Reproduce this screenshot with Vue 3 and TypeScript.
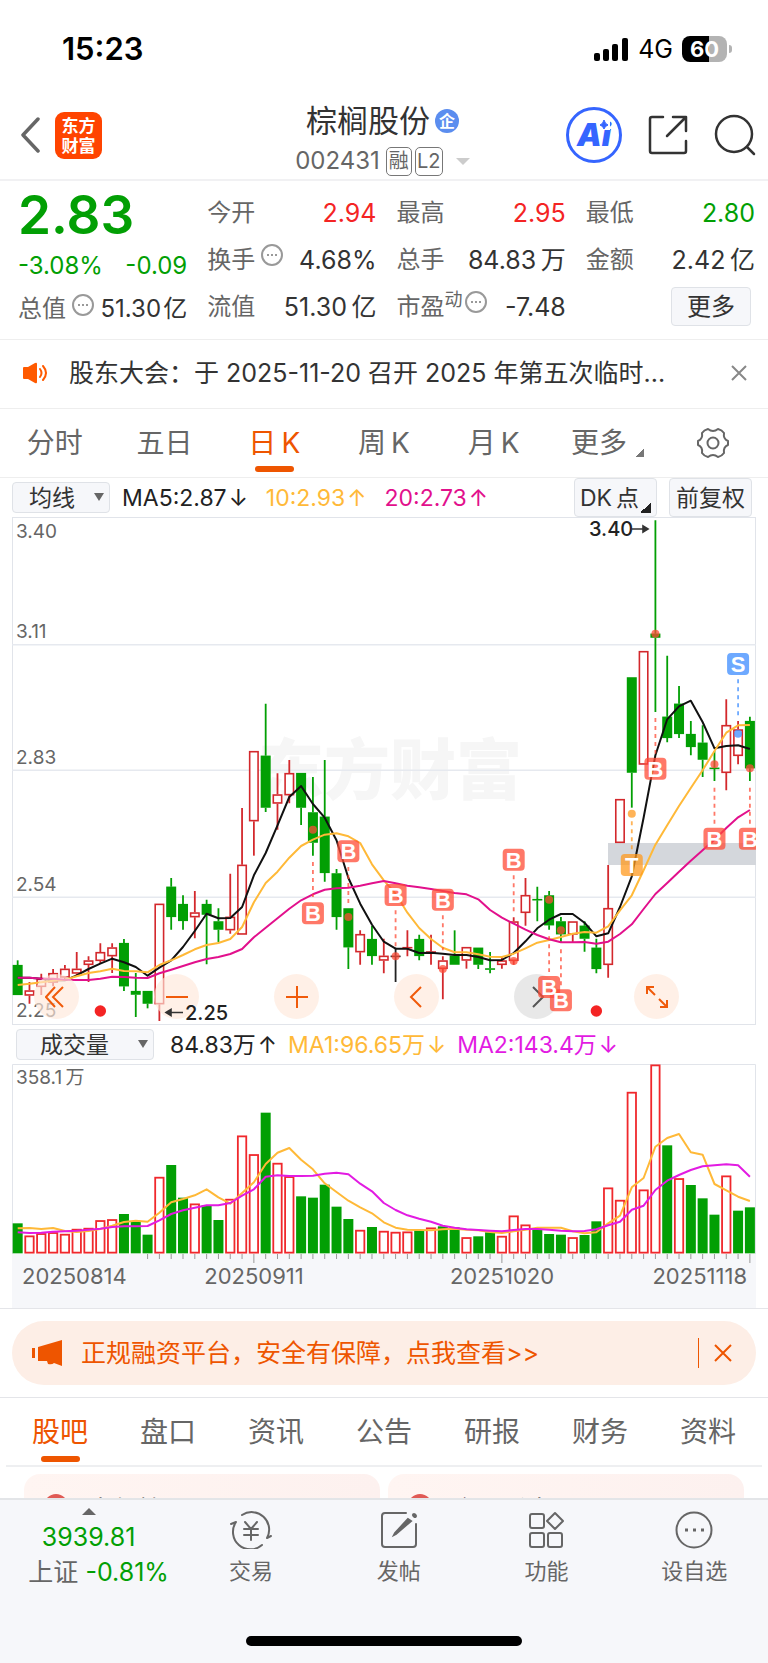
<script setup lang="ts">
import { ref } from 'vue'

type Tone = 'g' | 'r' | 'k'
type Candle = [Tone, number, number, number, number]

// Sub-pixel units: three per chart pixel. [tone, high, body top, body bottom, low]
const candles: Candle[] = [
  ['g', 1350, 1364, 1454, 1454], ['r', 1415, 1440, 1456, 1480], ['r', 1390, 1405, 1430, 1454],
  ['r', 1376, 1388, 1417, 1428], ['r', 1364, 1375, 1402, 1412], ['r', 1325, 1375, 1390, 1400],
  ['r', 1338, 1350, 1364, 1415], ['r', 1299, 1325, 1352, 1358], ['r', 1299, 1311, 1338, 1388],
  ['g', 1286, 1298, 1428, 1442], ['g', 1388, 1442, 1453, 1520], ['g', 1442, 1442, 1480, 1494],
  ['r', 1180, 1180, 1482, 1532], ['g', 1103, 1129, 1220, 1258], ['g', 1155, 1181, 1232, 1258],
  ['r', 1142, 1206, 1221, 1284], ['g', 1168, 1181, 1213, 1362], ['g', 1194, 1233, 1258, 1296],
  ['r', 1090, 1219, 1260, 1270], ['r', 893, 1063, 1273, 1273], ['r', 722, 722, 933, 1036],
  ['g', 580, 736, 892, 905], ['r', 789, 852, 880, 958], ['r', 749, 788, 855, 879],
  ['g', 788, 788, 892, 944], ['g', 800, 906, 997, 1036], ['g', 749, 919, 1088, 1114],
  ['g', 1076, 1089, 1220, 1258], ['g', 1194, 1194, 1311, 1376], ['r', 1260, 1271, 1326, 1363],
  ['g', 1247, 1286, 1337, 1363], ['r', 1285, 1336, 1351, 1389], ['k', 1312, 1336, 1340, 1415],
  ['r', 1260, 1310, 1314, 1338], ['g', 1273, 1286, 1337, 1350], ['r', 1273, 1323, 1327, 1363],
  ['r', 1338, 1350, 1376, 1467], ['g', 1260, 1336, 1363, 1363], ['r', 1310, 1310, 1351, 1375],
  ['g', 1312, 1312, 1363, 1376], ['g', 1325, 1374, 1378, 1389], ['r', 1340, 1350, 1364, 1375],
  ['r', 1221, 1233, 1352, 1363], ['r', 1103, 1154, 1208, 1246], ['g', 1129, 1166, 1170, 1233],
  ['g', 1142, 1155, 1245, 1258], ['g', 1220, 1233, 1272, 1296], ['r', 1233, 1233, 1273, 1298],
  ['g', 1233, 1246, 1285, 1324], ['g', 1285, 1312, 1376, 1389], ['r', 1064, 1193, 1364, 1402],
  ['r', 866, 866, 998, 998], ['g', 501, 501, 787, 892], ['r', 422, 422, 763, 763],
  ['g', 30, 370, 382, 605], ['g', 436, 619, 683, 696], ['g', 527, 580, 671, 683],
  ['g', 632, 671, 710, 735], ['g', 645, 697, 748, 800], ['g', 722, 772, 776, 812],
  ['r', 567, 644, 788, 840], ['r', 632, 657, 737, 762], ['g', 619, 632, 774, 812],
]
const ma5 = [1402, 1402, 1405, 1410, 1410, 1395, 1376, 1360, 1345, 1356, 1370, 1396, 1372, 1350, 1310, 1262, 1210, 1224, 1223, 1190, 1095, 1028, 945, 860, 827, 881, 922, 990, 1103, 1180, 1243, 1294, 1315, 1315, 1328, 1327, 1330, 1334, 1334, 1340, 1350, 1349, 1328, 1293, 1254, 1228, 1211, 1211, 1237, 1278, 1269, 1190, 1098, 922, 735, 627, 588, 571, 635, 714, 707, 705, 716]
const ma10 = [1424, 1420, 1416, 1411, 1408, 1398, 1388, 1383, 1375, 1382, 1383, 1386, 1364, 1350, 1334, 1317, 1304, 1298, 1286, 1250, 1176, 1118, 1084, 1042, 1007, 988, 973, 969, 978, 998, 1062, 1110, 1150, 1207, 1253, 1286, 1312, 1326, 1326, 1332, 1339, 1340, 1330, 1314, 1297, 1289, 1280, 1270, 1265, 1267, 1248, 1200, 1155, 1080, 1003, 945, 887, 833, 780, 722, 667, 645, 644]
const ma20 = [1402, 1402, 1405, 1405, 1408, 1409, 1409, 1405, 1399, 1400, 1402, 1403, 1389, 1378, 1367, 1356, 1346, 1340, 1331, 1316, 1281, 1252, 1224, 1195, 1170, 1152, 1138, 1134, 1132, 1126, 1119, 1112, 1119, 1126, 1131, 1136, 1142, 1148, 1152, 1167, 1199, 1222, 1240, 1258, 1274, 1287, 1296, 1296, 1295, 1300, 1294, 1271, 1242, 1196, 1151, 1118, 1084, 1051, 1020, 988, 953, 921, 899]

type Signal = { i: number; k: 'B' | 'S' | 'T'; at: number; dot: number; from: number; to: number }
const signals: Signal[] = [
  { i: 25, k: 'B', at: 1209, dot: 958, from: 1055, to: 1160 },
  { i: 28, k: 'B', at: 1023, dot: 1220, from: 1070, to: 1180 },
  { i: 32, k: 'B', at: 1154, dot: 1338, from: 1200, to: 1310 },
  { i: 36, k: 'B', at: 1168, dot: 1376, from: 1215, to: 1320 },
  { i: 42, k: 'B', at: 1048, dot: 1352, from: 1095, to: 1205 },
  { i: 45, k: 'B', at: 1430, dot: 1168, from: 1278, to: 1385 },
  { i: 46, k: 'B', at: 1470, dot: 1260, from: 1317, to: 1425 },
  { i: 52, k: 'T', at: 1064, dot: 910, from: 933, to: 1020 },
  { i: 54, k: 'B', at: 775, dot: 370, from: 623, to: 730 },
  { i: 59, k: 'B', at: 985, dot: 762, from: 832, to: 940 },
  { i: 61, k: 'S', at: 461, dot: 670, from: 507, to: 615 },
  { i: 62, k: 'B', at: 985, dot: 774, from: 832, to: 940 },
]
const tones = { B: '#ff4b36', S: '#3d8dff', T: '#ff9a1f' }

const volumes: [Tone, number][] = [
  ['g', 608], ['r', 645], ['r', 638], ['r', 635], ['r', 640], ['r', 625], ['r', 622], ['r', 599], ['r', 596], ['g', 580],
  ['g', 602], ['g', 642], ['r', 469], ['g', 433], ['g', 531], ['r', 549], ['g', 554], ['g', 598], ['r', 535], ['r', 345],
  ['r', 401], ['g', 276], ['r', 427], ['r', 467], ['g', 527], ['g', 531], ['g', 492], ['g', 558], ['g', 595], ['r', 628],
  ['g', 619], ['r', 631], ['r', 634], ['r', 633], ['g', 629], ['r', 621], ['g', 617], ['g', 620], ['r', 650], ['g', 647],
  ['g', 635], ['r', 646], ['r', 585], ['r', 612], ['g', 625], ['g', 640], ['g', 642], ['r', 650], ['g', 643], ['g', 602],
  ['r', 501], ['r', 538], ['r', 214], ['r', 507], ['r', 132], ['g', 374], ['r', 473], ['g', 493], ['g', 533], ['g', 582],
  ['r', 465], ['g', 570], ['g', 560],
]
const vma1 = [623, 622, 625, 622, 631, 634, 631, 625, 615, 604, 600, 603, 576, 545, 535, 524, 506, 530, 549, 517, 485, 430, 396, 382, 417, 446, 488, 514, 540, 560, 578, 605, 621, 627, 628, 629, 626, 624, 627, 629, 634, 637, 632, 627, 621, 621, 621, 632, 638, 635, 608, 585, 500, 472, 378, 352, 340, 395, 402, 490, 509, 528, 541]
const vma2 = [635, 637, 636, 633, 632, 630, 627, 624, 619, 617, 617, 616, 599, 580, 569, 561, 554, 554, 547, 525, 506, 468, 464, 466, 466, 465, 459, 456, 461, 489, 512, 547, 568, 584, 594, 603, 615, 621, 626, 628, 630, 632, 628, 625, 625, 627, 630, 632, 631, 626, 614, 603, 567, 555, 508, 480, 463, 448, 437, 434, 431, 434, 468]

const cx = (i: number) => 5.67 + i * 11.81
const py = (v: number) => (v - 20) / 3
const vy = (v: number) => (v - 130) / 3
const line = (vals: number[], f: (v: number) => number) =>
  vals.map((v, i) => `${cx(i).toFixed(1)},${f(v).toFixed(1)}`).join(' ')
const color = (t: Tone) => (t === 'g' ? '#029f04' : t === 'r' ? '#d3282c' : '#222')

const grid = [403, 780, 1161]
const axis = [
  { t: '3.40', y: 21 }, { t: '3.11', y: 121 }, { t: '2.83', y: 247 }, { t: '2.54', y: 374 }, { t: '2.25', y: 500 },
]
const ticks = Array.from({ length: 52 }, (_, n) => n + 11)

const periods = ['分时', '五日', '日\u2009K', '周\u2009K', '月\u2009K']
const period = ref(periods[2])
const sections = ['股吧', '盘口', '资讯', '公告', '研报', '财务', '资料']
const section = ref('股吧')
</script>

<template>
  <div class="app">
    <div class="status">
      <span class="clock">15:23</span>
      <span class="status-right">
        <svg width="34" height="23" viewBox="0 0 34 23"><rect x="0" y="15" width="6" height="8" rx="2" /><rect x="9" y="11" width="6" height="12" rx="2" /><rect x="18" y="6" width="6" height="17" rx="2" /><rect x="28" y="0" width="6" height="23" rx="2" /></svg>
        <span class="net">4G</span>
        <span class="battery"><b>60</b></span><i class="nub"></i>
      </span>
    </div>

    <header class="head">
      <div class="side start">
        <button class="icon" aria-label="返回"><svg width="20" height="36" viewBox="0 0 20 36"><path d="M18 2 3 18l15 16" fill="none" stroke="#666" stroke-width="3.500" stroke-linecap="round" stroke-linejoin="round" /></svg></button>
        <span class="logo"><span>东方</span><span>财富</span></span>
      </div>
      <div class="title">
        <h1>棕榈股份<span class="corp">企</span></h1>
        <div class="code">002431<span class="tag">融</span><span class="tag l2">L2</span><i class="tri"></i></div>
      </div>
      <div class="side end">
        <button class="ai" aria-label="Ai"><span>Ai</span><svg class="star" width="12" height="12" viewBox="0 0 12 12"><path d="M0 0h12v11H0z" fill="#fff" /><path d="M6 1q1 4 4 5-3 1-4 4-1-3-4-4 3-1 4-5z" fill="#3565ff" stroke="#3565ff" /></svg></button>
        <button class="icon" aria-label="分享"><svg width="40" height="40" viewBox="0 0 40 40" fill="none" stroke="#333" stroke-width="2.500" stroke-linecap="round" stroke-linejoin="round"><path d="M15 2H4Q2 2 2 4v32q0 2 2 2h32q2 0 2-2V26M25 2h13v14M38 2 19 21" /></svg></button>
        <button class="icon" aria-label="搜索"><svg width="42" height="42" viewBox="0 0 42 42" fill="none" stroke="#333" stroke-width="2.500" stroke-linecap="round"><circle cx="20" cy="20" r="18" /><path d="m33 33 7 7" /></svg></button>
      </div>
    </header>

    <section class="quote">
      <div class="col main">
        <strong class="price">2.83</strong>
        <div class="cell chg"><span>-3.08%</span><span>-0.09</span></div>
        <div class="cell"><span class="lab">总值<svg class="info" viewBox="0 0 22 22"><circle cx="11" cy="11" r="10" /><path d="M6 11h2M10 11h2M14 11h2" /></svg></span><span class="num">51.30&#8202;亿</span></div>
      </div>
      <div class="col">
        <div class="cell"><span class="lab">今开</span><span class="up">2.94</span></div>
        <div class="cell"><span class="lab">换手<svg class="info gap" viewBox="0 0 22 22"><circle cx="11" cy="11" r="10" /><path d="M6 11h2M10 11h2M14 11h2" /></svg></span><span>4.68%</span></div>
        <div class="cell"><span class="lab">流值</span><span>51.30&#8201;亿</span></div>
      </div>
      <div class="col">
        <div class="cell"><span class="lab">最高</span><span class="up">2.95</span></div>
        <div class="cell"><span class="lab">总手</span><span>84.83&#8201;万</span></div>
        <div class="cell"><span class="lab">市盈<small>动</small><svg class="info" viewBox="0 0 22 22"><circle cx="11" cy="11" r="10" /><path d="M6 11h2M10 11h2M14 11h2" /></svg></span><span>-7.48</span></div>
      </div>
      <div class="col">
        <div class="cell"><span class="lab">最低</span><span class="down">2.80</span></div>
        <div class="cell"><span class="lab">金额</span><span>2.42&#8201;亿</span></div>
        <div class="cell more"><button class="box">更多</button></div>
      </div>
    </section>

    <section class="notice">
      <svg width="26" height="22" viewBox="0 0 26 22"><path d="M1 6q0-1 1-1h4l7-4q2-1 2 1v18q0 2-2 1l-7-4H2q-1 0-1-1z" fill="#ff5a00" /><path d="M18 7q3 4 0 8M21 4q6 7 0 14" fill="none" stroke="#ff5a00" stroke-width="2" stroke-linecap="round" /></svg>
      <a href="#">股东大会：于 2025-11-20 召开 2025 年第五次临时...</a>
      <button class="icon" aria-label="关闭"><svg width="18" height="18" viewBox="0 0 18 18"><path d="m2 2 14 14M16 2 2 16" stroke="#888" stroke-width="2" /></svg></button>
    </section>

    <nav class="periods">
      <button v-for="p in periods" :key="p" :class="{ on: p === period }" @click="period = p">{{ p }}</button>
      <button class="wide">更多<i class="corner"></i></button>
      <button aria-label="设置"><svg width="34" height="34" viewBox="0 0 34 34" fill="none" stroke="#666" stroke-width="2" stroke-linejoin="round"><path d="M12 3q5 4 10 0 4 1 6 4-1 6 4 8v4q-5 2-4 8-2 3-6 4-5-4-10 0-4-1-6-4 1-6-4-8v-4q5-2 4-8 2-3 6-4z" /><circle cx="17" cy="17" r="5.500" /></svg></button>
    </nav>

    <div class="bar">
      <label class="pick"><select aria-label="指标"><option>均线</option></select><i></i></label>
      <span class="m5">MA5:2.87<em>↓</em></span>
      <span class="m10">10:2.93<em>↑</em></span>
      <span class="m20">20:2.73<em>↑</em></span>
      <span class="right">
        <button class="box dk">DK&#8201;点<i class="corner dark"></i></button>
        <button class="box fq">前复权</button>
      </span>
    </div>

    <div class="chart">
      <svg class="plot" viewBox="0 0 744 508" role="img" aria-label="日K线图">
        <text class="mark" x="378" y="277" text-anchor="middle">东方财富</text>
        <rect x="0.500" y="0.500" width="743" height="507" fill="none" stroke="#e1e4ea" />
        <path v-for="g in grid" :key="g" :d="`M0 ${py(g)}H744`" stroke="#e6e9ef" stroke-width="1.500" />
        <rect x="596" y="326" width="148" height="22" fill="#d4d7dc" />
        <g v-for="(c, i) in candles" :key="i" :stroke="color(c[0])">
          <path :d="`M${cx(i)} ${py(c[1])}V${py(c[2])}M${cx(i)} ${py(c[3])}V${py(c[4])}`" stroke-width="1.800" />
          <path v-if="c[3] - c[2] < 8" :d="`M${cx(i) - 5} ${py(c[2]) + 0.700}h10`" stroke-width="1.600" />
          <rect v-else :x="cx(i) - 4.200" :y="py(c[2]) + 0.700" width="8.400" :height="(c[3] - c[2]) / 3 - 1.400" :fill="c[0] === 'g' ? '#029f04' : '#fff'" stroke-width="1.600" />
        </g>
        <text v-for="a in axis" :key="a.t" class="axis" x="4" :y="a.y">{{ a.t }}</text>
        <polyline :points="line(ma5, py)" class="ln" stroke="#111" />
        <polyline :points="line(ma10, py)" class="ln" stroke="#ffb938" />
        <polyline :points="line(ma20, py)" class="ln" stroke="#e2108c" />
      </svg>
      <div class="tools">
        <button aria-label="最左"><svg viewBox="0 0 24 24"><path d="M10 2 1 12l9 10M18 2 8 12l10 10" /></svg></button>
        <button aria-label="缩小"><svg viewBox="0 0 24 24"><path d="M1 12h22" /></svg></button>
        <button aria-label="放大"><svg viewBox="0 0 24 24"><path d="M1 12h22M12 1v22" /></svg></button>
        <button aria-label="向左"><svg viewBox="0 0 24 24"><path d="M16 2 6 12l10 10" /></svg></button>
        <button class="grey" aria-label="向右"><svg viewBox="0 0 24 24"><path d="m8 2 10 10L8 22" /></svg></button>
        <button aria-label="全屏"><svg viewBox="0 0 24 24"><path d="m2 2 8 8M2 9V2h7M22 22l-8-8M22 15v7h-7" /></svg></button>
      </div>
      <svg class="plot over" viewBox="0 0 744 508" aria-hidden="true">
        <circle :cx="cx(7)" cy="494" r="5.700" fill="#f42424" />
        <circle :cx="cx(49)" cy="494" r="5.700" fill="#f42424" />
        <g v-for="s in signals" :key="s.i" :fill="tones[s.k]" opacity="0.750">
          <circle :cx="cx(s.i)" :cy="py(s.dot)" r="4" />
          <path :d="`M${cx(s.i)} ${py(s.from)}V${py(s.to)}`" :stroke="tones[s.k]" stroke-width="1.800" stroke-dasharray="4 4" />
          <rect :x="cx(s.i) - 11" :y="py(s.at) - 11" width="22" height="22" rx="4" />
        </g>
        <text v-for="s in signals" :key="s.i" class="sig" :x="cx(s.i)" :y="py(s.at) + 8" text-anchor="middle">{{ s.k }}</text>
        <path d="M154 495.500h17M154 495.500l5-3v6z" stroke="#333" stroke-width="1.600" fill="#333" />
        <text class="peak" x="173" y="503">2.25</text>
        <text class="peak" x="577" y="19">3.40</text>
        <path d="M620 12h16M636 12l-5-3v6z" stroke="#333" stroke-width="1.600" fill="#333" />
      </svg>
    </div>

    <div class="bar vol">
      <label class="pick big"><select aria-label="副图指标"><option>成交量</option></select><i></i></label>
      <span class="m5">84.83万<em>↑</em></span>
      <span class="m10">MA1:96.65万<em>↓</em></span>
      <span class="mv">MA2:143.4万<em>↓</em></span>
    </div>

    <div class="chart">
      <svg class="plot" viewBox="0 0 744 244" role="img" aria-label="成交量图">
        <rect x="0" y="190" width="744" height="54" fill="#f6f7fa" />
        <path d="M0.500 190V0.500h743V190" fill="none" stroke="#e1e4ea" />
        <text class="axis" x="4" y="20">358.1&#8201;万</text>
        <template v-for="(v, i) in volumes" :key="i">
          <rect v-if="v[0] === 'g'" :x="cx(i) - 5" :y="vy(v[1])" width="10" :height="(698 - v[1]) / 3" fill="#029f04" />
          <rect v-else :x="cx(i) - 4.200" :y="vy(v[1]) + 0.700" width="8.400" :height="(698 - v[1]) / 3 - 1.400" fill="#fff" stroke="#f0282c" stroke-width="1.800" />
        </template>
        <path v-for="t in ticks" :key="t" :d="`M${cx(t)} 190v${t % 21 === 20 ? 9 : 5}`" stroke="#999" />
        <polyline :points="line(vma1, vy)" class="ln" stroke="#ffb938" />
        <polyline :points="line(vma2, vy)" class="ln" stroke="#e21be2" />
        <text class="date" x="10" y="220">20250814</text>
        <text class="date" x="242" y="220" text-anchor="middle">20250911</text>
        <text class="date" x="490" y="220" text-anchor="middle">20251020</text>
        <text class="date" x="735" y="220" text-anchor="end">20251118</text>
      </svg>
    </div>

    <section class="promo-wrap">
      <div class="promo">
        <svg width="31" height="26" viewBox="0 0 31 26" fill="#ee5500"><path d="M0 8h3v10H0zM6 7 30 0v26l-8-3q-2 2-6 1l-1-3H6z" /></svg>
        <a href="#">正规融资平台，安全有保障，点我查看&gt;&gt;</a>
        <button class="icon" aria-label="关闭广告"><svg width="18" height="18" viewBox="0 0 18 18"><path d="m1 1 16 16M17 1 1 17" stroke="#ee5500" stroke-width="2" /></svg></button>
      </div>
    </section>

    <nav class="sections">
      <button v-for="s in sections" :key="s" :class="{ on: s === section }" @click="section = s">{{ s }}</button>
    </nav>
    <section class="cards">
      <article><i></i><span>大气榜</span></article>
      <article><i></i><span>今日看盘</span></article>
    </section>

    <footer class="dock">
      <div class="dock-row">
        <a href="#" class="index"><i class="caret"></i><span class="down">3939.81</span><span class="sub">上证 <b class="down">-0.81%</b></span></a>
        <button><svg width="42" height="38" viewBox="0 0 42 38" fill="none" stroke="#666" stroke-width="2" stroke-linecap="round" stroke-linejoin="round"><path d="M12 4A17.500 17.500 0 0 1 37 27l4-2M32 34A17.500 17.500 0 0 1 6 11l-5 2" /><path d="m15 11 6 7 6-7M21 18v11M14 18h14M14 24h14" /></svg>交易</button>
        <button><svg width="38" height="38" viewBox="0 0 38 38" fill="none" stroke="#666" stroke-width="2" stroke-linecap="round"><path d="M26 2H5Q2 2 2 5v28q0 3 3 3h28q3 0 3-3V13" /><path d="M28 8 15 22l-1 2 2-1L31 10z" fill="#666" /><path d="m34 4 1 1" stroke-width="4" /></svg>发帖</button>
        <button><svg width="36" height="38" viewBox="0 0 36 38" fill="none" stroke="#666" stroke-width="2" stroke-linejoin="round"><rect x="2" y="3" width="14" height="14" rx="2" /><rect x="2" y="22" width="14" height="14" rx="2" /><rect x="20" y="22" width="14" height="14" rx="2" /><path d="m27 2 8 8-8 8-8-8z" /></svg>功能</button>
        <button><svg width="38" height="38" viewBox="0 0 38 38" fill="none" stroke="#666" stroke-width="2"><circle cx="19" cy="19" r="17.500" /><path d="M10 19h3M18 19h3M26 19h3" stroke-width="3" /></svg>设自选</button>
      </div>
      <div class="home"></div>
    </footer>
  </div>
</template>

<style>
body { background: #fff; }
</style>

<style scoped>
.app { min-height: 100vh; display: flex; flex-direction: column; background: #fff; color: #333; font: 400 25px/30px Inter, "Noto Sans CJK SC", sans-serif; }
.app * { box-sizing: border-box; }
button, select { font: inherit; color: inherit; border: 0; background: none; padding: 0; margin: 0; }
a { color: inherit; text-decoration: none; }
svg { display: block; flex: none; }
.up { color: #f42424; }
.down { color: #029f04; font-weight: 400; }
.status { height: 98px; padding: 0 36px 0 62px; display: flex; justify-content: space-between; align-items: center; color: #000; }
.clock { font-size: 31px; font-weight: 600; }
.status-right { display: flex; align-items: center; }
.net { margin: 0 9px 0 10px; font-size: 25px; }
.battery { width: 45px; height: 26px; border-radius: 8px; background: linear-gradient(90deg, #000 60%, #b3b3b3 60%); color: #fff; text-align: center; font-size: 22px; line-height: 26px; }
.nub { width: 3px; height: 8px; margin-left: 2px; border-radius: 0 4px 4px 0; background: #b3b3b3; }
.head { height: 83px; padding: 0 12px; display: grid; grid-template-columns: 1fr auto 1fr; align-items: end; border-bottom: 2px solid #f1f1f3; }
.side { height: 56px; margin-bottom: 16px; display: flex; align-items: center; gap: 15px; }
.start { padding-left: 8px; }
.end { justify-content: flex-end; gap: 26px; }
.logo { width: 47px; height: 47px; padding: 4px 0; border-radius: 9px; background: #ff4400; color: #fff; font-size: 17px; line-height: 20px; font-weight: 700; display: flex; flex-direction: column; align-items: center; }
.title { display: flex; flex-direction: column; align-items: center; padding-right: 3px; }
h1 { margin: 0; font-size: 31px; line-height: 44px; font-weight: 400; display: flex; align-items: center; }
.corp { width: 24px; height: 24px; margin-left: 5px; border-radius: 50%; background: #5b8def; color: #fff; font-size: 16px; line-height: 24px; text-align: center; font-weight: 700; }
.code { display: flex; align-items: center; color: #666; font-size: 24px; line-height: 36px; }
.tag { width: 26px; height: 29px; margin-left: 6px; border: 1px solid #777; border-radius: 5px; font-size: 20px; line-height: 27px; text-align: center; }
.tag + .tag { width: 28px; margin-left: 3px; }
.tri { margin-left: 13px; border: 7px solid transparent; border-top-color: #ccc; border-bottom: 0; }
.ai { position: relative; width: 56px; height: 56px; border: 3px solid #3565ff; border-radius: 50%; color: #3565ff; font-size: 31px; font-weight: 900; font-style: italic; }
.star { position: absolute; top: 9px; right: 9px; }
.quote { padding: 8px 13px 9px 18px; display: grid; grid-template-columns: repeat(4, 1fr); gap: 20px; border-bottom: 1px solid #eee; }
.cell { height: 47px; display: flex; align-items: center; justify-content: space-between; white-space: nowrap; }
.lab { color: #666; font-size: 24px; display: flex; align-items: center; }
.lab small { font-size: 18px; align-self: flex-start; line-height: 18px; }
.info { width: 22px; height: 22px; margin: 0 0 9px 6px; fill: none; stroke: #999; stroke-width: 2; }
small + .info { margin-left: 2px; }
.price { display: block; height: 53px; color: #029f04; font-size: 53px; line-height: 53px; font-weight: 600; }
.main .cell { height: 38px; font-size: 24px; }
.main .chg { height: 48px; color: #029f04; }
.more { justify-content: flex-end; padding-right: 4px; }
.box { border: 1px solid #dfe2e7; border-radius: 4px; background: #f6f7fa; font-size: 24px; }
.more .box { width: 80px; height: 39px; }
.notice { height: 69px; padding: 0 20px 2px 22px; display: flex; align-items: center; gap: 21px; border-bottom: 1px solid #eee; white-space: nowrap; }
.notice a { flex: 1; overflow: hidden; }
.periods { height: 69px; display: grid; grid-template-columns: repeat(7, 1fr); align-items: stretch; border-bottom: 1px solid #eee; color: #666; font-size: 28px; }
.periods button, .sections button { position: relative; display: flex; align-items: center; justify-content: center; }
.on { color: #ee5500; }
.on::after { content: ""; position: absolute; bottom: 5px; width: 39px; height: 6px; border-radius: 3px; background: #ee5500; }
.wide { padding-left: 8px; }
.corner { width: 8px; height: 9px; margin: 18px 0 0 9px; background: linear-gradient(135deg, transparent 50%, #777 50%); }
.bar { height: 39px; padding: 0 12px; display: flex; align-items: center; gap: 18px; font-size: 23px; white-space: nowrap; }
.bar em { font-style: normal; margin-left: 2px; }
.pick { position: relative; width: 98px; height: 31px; margin-right: -6px; }
.pick select { width: 100%; height: 100%; padding: 0 0 0 16px; appearance: none; border: 1px solid #dfe2e7; border-radius: 4px; background: #f6f7fa; line-height: 28px; }
.pick i { position: absolute; right: 6px; top: 11px; border: 5px solid transparent; border-top: 8px solid #666; border-bottom: 0; pointer-events: none; }
.m5 { color: #222; } .m10 { color: #ffb938; } .m20 { color: #e2108c; } .mv { color: #e21be2; }
.vol { gap: 11px; }
.vol .pick { width: 138px; margin: 0 5px 0 4px; }
.vol select { padding-left: 23px; }
.right { margin-left: auto; margin-right: 4px; display: flex; gap: 12px; }
.right .box { height: 39px; width: 83px; font-size: 23px; }
.right .dk { position: relative; padding-right: 12px; }
.dark { position: absolute; right: 5px; bottom: 3px; margin: 0; width: 11px; height: 11px; background: linear-gradient(135deg, transparent 50%, #222 50%); }
.chart { position: relative; margin: 0 12px; }
.plot { width: 100%; height: auto; }
.over { position: absolute; inset: 0; pointer-events: none; }
.ln { fill: none; stroke-width: 2; stroke-linejoin: round; }
.axis { font-size: 19px; fill: #666; }
.date { font-size: 22px; fill: #666; }
.mark { font-size: 66px; font-weight: 900; fill: #f6f6f6; }
.sig { font: 700 22px "Liberation Sans", sans-serif; fill: #fff; }
.peak { font-size: 20px; font-weight: 500; fill: #222; }
.tools { position: absolute; left: 22px; right: 77px; bottom: 6px; display: flex; justify-content: space-between; }
.tools button { width: 45px; height: 45px; border-radius: 50%; background: rgba(255, 232, 218, .65); display: grid; place-items: center; color: #f05a0a; }
.tools .grey { background: rgba(210, 210, 210, .5); color: #555; }
.tools svg { width: 24px; height: 24px; fill: none; stroke: currentColor; stroke-width: 2; }
.promo-wrap { padding: 12px; border: solid #e4e5e9; border-width: 1px 0; }
.promo { height: 64px; padding: 0 24px 0 20px; border-radius: 32px; background: #fdeee6; color: #ee5500; display: flex; align-items: center; gap: 18px; white-space: nowrap; }
.promo a { flex: 1; }
.promo .icon { border-left: 1px solid #ee5500; padding: 6px 0 6px 15px; }
.sections { height: 69px; margin: 0 6px; display: grid; grid-template-columns: repeat(7, 1fr); border-bottom: 2px solid #eeeff1; color: #666; font-size: 28px; }
.sections .on::after { bottom: 3px; }
.cards { height: 31px; overflow: hidden; padding: 7px 24px 0; display: grid; grid-template-columns: 1fr 1fr; gap: 8px; }
article { height: 80px; padding: 20px 20px 0; border-radius: 16px; background: linear-gradient(90deg, #fff5f2, #fdf1ef); display: flex; gap: 20px; color: #222; line-height: 32px; }
article i { width: 24px; height: 24px; border-radius: 50%; background: #e05a55; }
.dock { flex: 1; border-top: 2px solid #e3e5e8; background: #f6f7fa; display: flex; flex-direction: column; justify-content: space-between; }
.dock-row { display: grid; grid-template-columns: 6fr 5fr 5fr 5fr 5fr; color: #666; font-size: 22px; }
.dock-row > * { display: flex; flex-direction: column; align-items: center; padding-top: 11px; gap: 7px; line-height: 30px; }
.dock-row .index { gap: 7px; padding-top: 8px; font-size: 25px; }
.dock-row .index .sub { line-height: 26px; padding-left: 20px; }
.caret { border: 7px solid transparent; border-bottom-color: #666; border-top: 0; }
.home { width: 36%; height: 10px; margin: 0 auto 17px; border-radius: 5px; background: #000; }
</style>
